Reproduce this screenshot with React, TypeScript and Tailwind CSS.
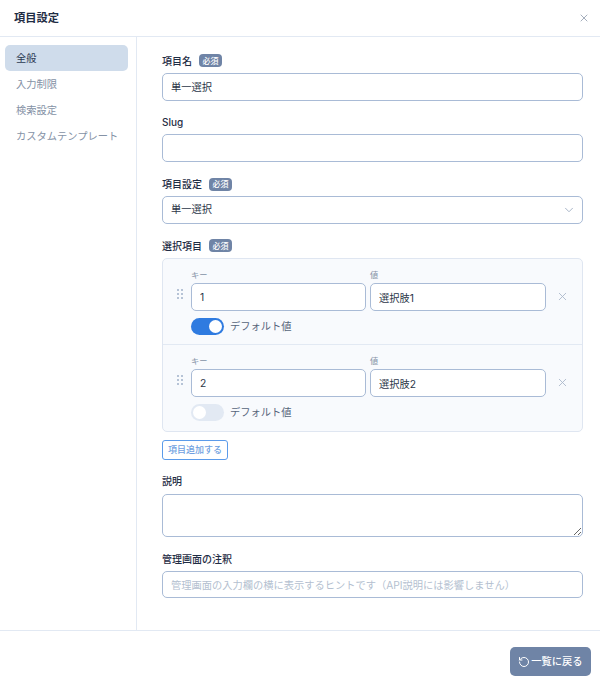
import React from 'react';
import { ChevronDown, RotateCcw, X } from 'lucide-react';

const font = { fontFamily: 'Inter, "Noto Sans CJK JP", sans-serif' };

const Badge: React.FC = () => (
  <span className="ml-[7px] flex h-[13px] w-[23px] items-center justify-center rounded-[4px] bg-[#6f84a6] text-[8px] font-medium leading-none text-white">
    必須
  </span>
);

const Label: React.FC<{ text: string; required?: boolean }> = ({ text, required }) => (
  <div className="flex h-[14px] items-center text-[10px] font-medium leading-[14px] text-[#1f2d45]">
    {text}
    {required && <Badge />}
  </div>
);

const inputClass =
  'block w-full rounded-[5px] border border-[#a9bbd6] bg-white px-2 text-[10.25px] text-[#2b3648] outline-none placeholder:text-[#b4bfd0]';

const Choice: React.FC<{ k: string; v: string; on: boolean; last?: boolean }> = ({ k, v, on, last }) => (
  <div className={`flex h-[86px] pl-[14px] pr-[11px] pt-[10px] ${last ? '' : 'border-b border-[#e2e9f3]'}`}>
    <div className="mt-[20px] grid h-[10px] w-[6px] grid-cols-2 gap-x-[2px] gap-y-[2px]">
      {[0, 1, 2, 3, 4, 5].map((i) => (
        <span key={i} className="h-[2px] w-[2px] bg-[#b6c3d6]" />
      ))}
    </div>
    <div className="ml-[8px]">
      <div className="flex gap-[4px]">
        <div className="w-[175px]">
          <div className="h-[14px] text-[8.2px] leading-[12px] text-[#8592a6]">キー</div>
          <input className={`${inputClass} h-[27.5px]`} defaultValue={k} />
        </div>
        <div className="w-[176px]">
          <div className="h-[14px] text-[8.2px] leading-[12px] text-[#8592a6]">値</div>
          <input className={`${inputClass} h-[27.5px]`} defaultValue={v} />
        </div>
      </div>
      <div className="mt-[7.5px] flex items-center">
        <span
          className={`flex h-[16.5px] w-[33px] items-center rounded-full px-[2px] ${
            on ? 'justify-end bg-[#2f7be0]' : 'justify-start bg-[#e2e9f3]'
          }`}
        >
          <span className="h-[13px] w-[13px] rounded-full bg-white" />
        </span>
        <span className="ml-[6px] text-[10.25px] text-[#56647a]">デフォルト値</span>
      </div>
    </div>
    <X size={13} strokeWidth={1.6} className="ml-[9.5px] mt-[20.5px] text-[#a9b6ca]" />
  </div>
);

const App: React.FC = () => {
  const nav = ['全般', '入力制限', '検索設定', 'カスタムテンプレート'];

  return (
    <div style={font} className="flex h-[683px] w-[600px] flex-col overflow-hidden bg-white">
      <header className="flex h-[37px] shrink-0 items-center justify-between border-b border-[#e2e9f3] pl-[14px] pr-[10px]">
        <h1 className="text-[11.25px] font-bold text-[#1f2d45]">項目設定</h1>
        <X size={12} strokeWidth={1.6} className="text-[#8d99ab]" />
      </header>

      <div className="flex h-[593px] shrink-0">
        <aside className="flex w-[137px] shrink-0 flex-col border-r border-[#e2e9f3] pl-[5px] pr-[8px] pt-[8px]">
          {nav.map((item, idx) => (
            <div
              key={item}
              className={`flex h-[26px] items-center rounded-[5px] pl-[11px] pt-[1.5px] text-[10.25px] ${
                idx === 0 ? 'bg-[#cfdceb] text-[#2b3a52]' : 'text-[#8592a6]'
              }`}
            >
              {item}
            </div>
          ))}
        </aside>

        <main className="flex-1 pl-[25px] pr-[17px] pt-[16.5px]">
          <Label text="項目名" required />
          <input className={`${inputClass} mt-[5px] h-[28px]`} defaultValue="単一選択" />

          <div className="mt-[14.75px]">
            <Label text="Slug" />
          </div>
          <input className={`${inputClass} mt-[5px] h-[28px]`} />

          <div className="mt-[14.75px]">
            <Label text="項目設定" required />
          </div>
          <div className={`${inputClass} mt-[5px] flex h-[28px] items-center justify-between pr-[6px]`}>
            <span>単一選択</span>
            <ChevronDown size={14} strokeWidth={1.6} className="text-[#a3b0c4]" />
          </div>

          <div className="mt-[14.75px]">
            <Label text="選択項目" required />
          </div>
          <div className="mt-[5.5px] h-[173.5px] rounded-[5px] border border-[#dfe6f1] bg-[#f8fafd]">
            <Choice k="1" v="選択肢1" on />
            <Choice k="2" v="選択肢2" on={false} last />
          </div>
          <button className="mt-[8px] flex h-[20px] w-[66px] items-center justify-center rounded-[3px] border border-[#5b9bea] bg-white text-[9px] font-medium text-[#6f9fe0]">
            項目追加する
          </button>

          <div className="mt-[14.5px]">
            <Label text="説明" />
          </div>
          <textarea className="mt-[5.5px] block h-[43.5px] w-full rounded-[5px] border border-[#a9bbd6] bg-white px-2 outline-none" />

          <div className="mt-[14.5px]">
            <Label text="管理画面の注釈" />
          </div>
          <input
            className={`${inputClass} mt-[5px] h-[27.5px]`}
            placeholder="管理画面の入力欄の横に表示するヒントです（API説明には影響しません）"
          />
        </main>
      </div>

      <footer className="flex flex-1 justify-end border-t border-[#e2e9f3] pr-[9px] pt-[16px]">
        <button className="flex h-[29px] w-[81px] items-center justify-center rounded-[5px] bg-[#6f84a6] text-[10.25px] font-medium text-white">
          <RotateCcw size={12} className="mr-[1px]" />
          一覧に戻る
        </button>
      </footer>
    </div>
  );
};

export default App;
